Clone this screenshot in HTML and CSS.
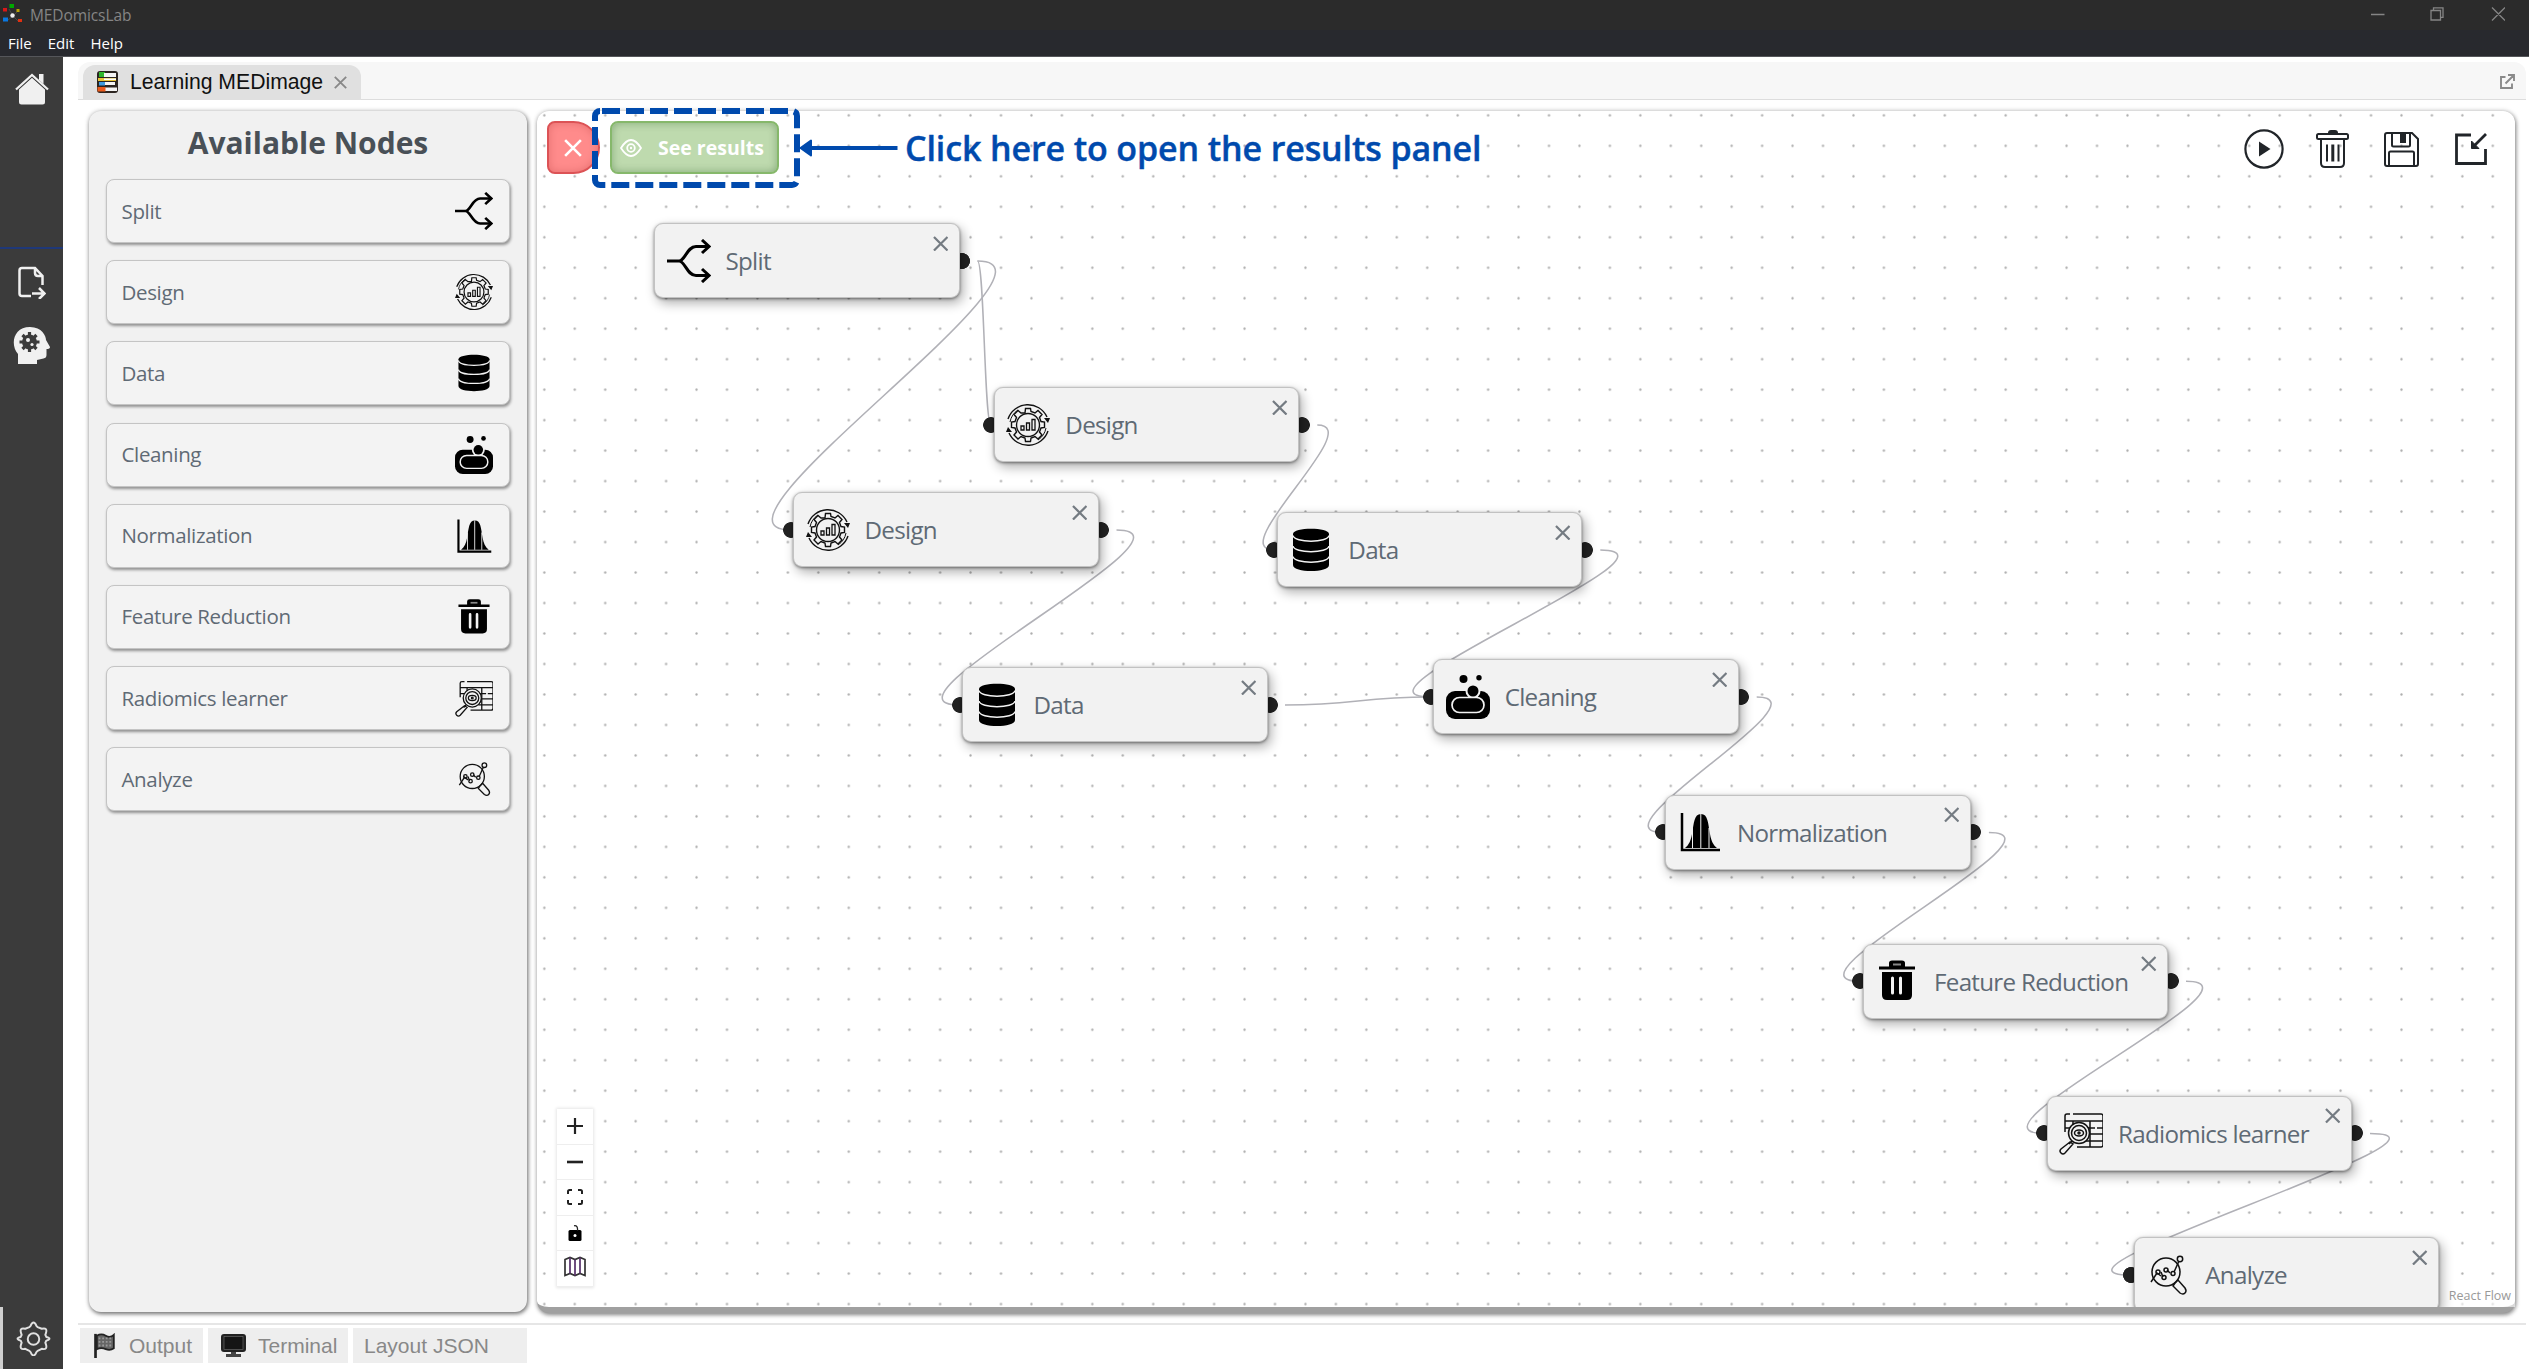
FILE: index.html
```html
<!DOCTYPE html>
<html lang="en">
<head>
<meta charset="utf-8">
<title>MEDomicsLab</title>
<link rel="stylesheet" href="styles.css">
</head>
<body>
<svg class="defs" width="0" height="0">
  <symbol id="i-split" viewBox="0 0 44 44">
    <g fill="none" stroke="#000" stroke-width="3"><path d="M0 22H12C18 22 20 7.500 29 7.500H42M12 22C18 22 20 36.500 29 36.500H42"/><path d="M35 1l7 6.500-7 6.500M35 30l7 6.500-7 6.500"/></g>
  </symbol>
  <symbol id="i-design" viewBox="0 0 44 44">
    <g fill="none" stroke="#111" stroke-width="1.400">
      <path d="M2 16A21 21 0 0 1 41 14M42 28A21 21 0 0 1 3 30"/>
      <path d="M4 19A18.500 18.500 0 0 1 12 7M40 25A18.500 18.500 0 0 1 32 37" stroke-width="1"/>
      <circle cx="22" cy="22" r="11.500"/>
      <path d="M19 10l.5-4.500h5L25 8.500l4 1.500 3-2.500 4 4-2.500 3 1.500 4 3.500.5v5.500l-3.500.5-1.500 4 2.500 3-4 4-3-2.500-4 1.500-.5 3.500h-5l-.5-3.500-4-1.500-3 2.500-4-4 2.500-3-1.500-4-3.500-.5V19l3.500-.5 1.500-4-2.500-3 4-4 3 2.500z"/>
      <path d="M15 23h3v4h-3zM20.500 20h3v7h-3zM26 16.500h3V27h-3z" stroke-width="1.300"/>
    </g>
    <path d="M38 15h6l-2 5zM0 29l2-5 4 5z" fill="#111"/>
  </symbol>
  <symbol id="i-data" viewBox="0 0 44 44">
    <path d="M4 6C4-1 40-1 40 6v31c0 8-36 8-36 0z"/>
    <path d="M4 7.500c1 7.500 35 7.500 36 0M4 18c1 7.500 35 7.500 36 0M4 28.500c1 7.500 35 7.500 36 0" fill="none" stroke="#f2f2f2" stroke-width="1.500"/>
  </symbol>
  <symbol id="i-clean" viewBox="0 0 44 44">
    <rect x="0" y="16" width="44" height="28" rx="9"/>
    <circle cx="27" cy="16" r="7.500" fill="#f2f2f2"/>
    <rect x="6" y="22.500" width="32" height="15" rx="7.500" stroke="#f2f2f2" stroke-width="1.700"/>
    <circle cx="27" cy="16" r="5.500"/><circle cx="17.500" cy="4" r="4"/><circle cx="33" cy="2.800" r="2.700"/>
  </symbol>
  <symbol id="i-norm" viewBox="0 0 44 44">
    <path d="M4 3v37h38" fill="none" stroke="#000" stroke-width="2.500"/>
    <path d="M7 38c4-3 6-8 7-14 2-11 2-20 9-20s7 9 9 20c1 6 3 11 7 14z"/>
    <path d="M14.500 18v20M22.800 4v34M31 18v20" stroke="#f2f2f2" stroke-width="1"/>
  </symbol>
  <symbol id="i-bin" viewBox="0 0 44 44">
    <path d="M4 7.500h10V4q0-2.500 3-2.500h10q3 0 3 2.500v3.500h10v3H4z"/><path d="M18 4.500h8v2h-8z" fill="#888"/>
    <path d="M7 13h30v23q0 5-5 5H12q-5 0-5-5z"/>
    <path d="M17.500 19v15M25.500 19v15" stroke="#f2f2f2" stroke-width="3" stroke-linecap="round"/>
  </symbol>
  <symbol id="i-learn" viewBox="0 0 44 44">
    <g fill="none" stroke="#111" stroke-width="1.500">
      <path d="M11 3H8Q6 3 6 5v16M14 3h28q2 0 2 2v29q0 2-2 2H18M6 10h38M6 17h9M27 17h9m2 0h6M29 23h15M27 30h17M14 10v6M31 10v26"/>
      <circle cx="20" cy="22" r="10.500" fill="#f2f2f2"/><circle cx="20" cy="22" r="7.500"/><ellipse cx="20" cy="22" rx="4.500" ry="3"/><circle cx="20" cy="22" r="1"/>
      <path d="M13 30l-3 3M11 31l-9 7q-2 2 0 4t4 0l8-9z"/>
    </g>
  </symbol>
  <symbol id="i-analyze" viewBox="0 0 44 44">
    <g fill="none" stroke="#111" stroke-width="1.500">
      <circle cx="20" cy="19" r="14"/><path d="M5 29l6-9 4 3M17 24l-2-5M21 17l3 3M28 19l5-11"/>
      <circle cx="12" cy="19" r="2"/><circle cx="18" cy="24.500" r="2"/><circle cx="20" cy="17" r="2"/><circle cx="27" cy="20.500" r="2"/><circle cx="34" cy="6" r="2.700"/>
      <path d="M29 30l3-3 7 8q2 3 0 5t-5 0l-7-7 2-3"/>
    </g>
  </symbol>
  <symbol id="i-x" viewBox="0 0 16 16"><path d="M1 1l14 14M15 1L1 15" fill="none" stroke="currentColor" stroke-width="2.300"/></symbol>
</svg>

<div class="app">
  <header class="titlebar">
    <div class="title-row">
      <svg class="logo" viewBox="0 0 20 20"><path d="M6 5l4 7M14 8l-4 4M5 16l5-4M15 17l-5-5" stroke="#555" stroke-width=".7"/><rect x="6.500" y="0" width="4.500" height="4" fill="#00a800"/><rect x="0" y="4" width="4" height="3.500" fill="#d81818"/><rect x="13.500" y="5" width="3" height="3" fill="#b9a300"/><circle cx="9.500" cy="11.500" r="2.200" fill="#eee"/><rect x="0" y="13.500" width="5" height="4" fill="#0a78e0"/><rect x="15" y="15" width="4" height="3" fill="#e03010"/></svg>
      <span class="app-name">MEDomicsLab</span>
      <svg class="win-ctl" viewBox="0 0 134 14"><g fill="none" stroke="#858585" stroke-width="1.300"><path d="M0 7.500h13.500M60 3.500h9.500v9.500H60zM62.500 3.500V.8H72v9.500h-2.500M121 .5l13 13M134 .5l-13 13"/></g></svg>
    </div>
    <nav class="menu"><span>File</span><span>Edit</span><span>Help</span></nav>
  </header>

  <div class="workspace">
    <aside class="rail">
      <svg class="rail-home" viewBox="0 0 34 34"><path d="M4 17L17 5.500 30 17v13q0 2.500-2.500 2.500h-21Q4 32.500 4 30z" fill="#f0f0f0"/><path d="M1 17L17 2.500 33 17" fill="none" stroke="#3b3b3b" stroke-width="5"/><path d="M24 2h4.500v10L24 8z" fill="#f0f0f0"/><path d="M1 17.500L17 3l16 14.500" fill="none" stroke="#f0f0f0" stroke-width="2.300"/></svg>
      <div class="rail-line"></div>
      <svg class="rail-file" viewBox="0 0 28 33"><g fill="none" stroke="#f0f0f0" stroke-width="2.500"><path d="M13 30H4q-2.500 0-2.500-2.500v-23Q1.500 2 4 2h13l7.500 8v9M17 2v5q0 3 3 3h4.500M14 27.500h12M21 22l5.500 5.500L21 33"/></g></svg>
      <svg class="rail-head" viewBox="0 0 37 37"><path d="M5 37V27C-3 18 0 0 17 0c12 0 16 9 16 13l4 7q0 2-3.500 2v6q0 3-3 3.500L24 33v4z" fill="#f0f0f0"/><circle cx="16.500" cy="15" r="7.500" fill="#3b3b3b"/><path d="M16.500 5v20M6.500 15h20M9.500 8l14 14M23.500 8l-14 14" stroke="#3b3b3b" stroke-width="3.200"/><circle cx="15" cy="13" r="2" fill="#f0f0f0"/><circle cx="19" cy="17.500" r="1.600" fill="#f0f0f0"/></svg>
      <div class="rail-foot">
        <svg class="rail-gear" viewBox="0 0 34 34"><g fill="none" stroke="#e0e0e0" stroke-width="1.900" stroke-linejoin="round"><path d="M14 5q3-7 6 0l1 1 4 1.500q6-1.500 4 4.500l-.5 1.500 1 2q6 1.500 0 3.500l-1 2 .5 1.500q2 6-4 4.500l-4 2-1 1q-3 7-6 0l-1-1-4-2q-6 1.500-4-4.500l.5-1.500-1-2q-6-2 0-3.500l1-2L5 12Q3 6 9 7.500L13 6z"/><circle cx="17" cy="17.500" r="5.600"/></g></svg>
      </div>
    </aside>

    <main class="main">
      <div class="tabbar">
        <div class="tab">
          <svg class="books" viewBox="0 0 22 22"><rect x="1" y="0" width="21" height="22" rx="3" fill="#2b2420"/><path d="M3 1h6v5H3z" fill="#2eb62c"/><path d="M8 2h12v4H8zM8 11h11v3H8zM8 16.500h13v3.500H8z" fill="#f4f4f4"/><path d="M2 7h18v3H2z" fill="#e8c438"/><path d="M8 7.500h12v1.500H8z" fill="#fff"/><path d="M3 11h6v3.500H3z" fill="#3f9be0"/><path d="M1.500 16h8v4.500h-8z" fill="#ea5a1c"/></svg>
          <span class="tab-name">Learning MEDimage</span>
          <svg class="tab-x"><use href="#i-x"/></svg>
        </div>
        <svg class="popout" viewBox="0 0 15 15"><g fill="none" stroke="#8a8a8a" stroke-width="1.900"><path d="M5.500 3H1v11h11V9.500M8 1h6v6M14 1L5.500 9.500"/></g></svg>
      </div>

      <div class="panels">
        <section class="palette">
          <h1>Available Nodes</h1>
          <div class="item"><span>Split</span><svg><use href="#i-split"/></svg></div>
          <div class="item"><span>Design</span><svg><use href="#i-design"/></svg></div>
          <div class="item"><span>Data</span><svg><use href="#i-data"/></svg></div>
          <div class="item"><span>Cleaning</span><svg><use href="#i-clean"/></svg></div>
          <div class="item"><span>Normalization</span><svg><use href="#i-norm"/></svg></div>
          <div class="item"><span>Feature Reduction</span><svg><use href="#i-bin"/></svg></div>
          <div class="item"><span>Radiomics learner</span><svg><use href="#i-learn"/></svg></div>
          <div class="item"><span>Analyze</span><svg><use href="#i-analyze"/></svg></div>
        </section>

        <section class="flow">
          <div class="canvas">
            <svg class="edges" viewBox="537 111 1978 1196">
              <defs><pattern id="dots" x="529.100" y="100.100" width="30.445" height="30.480" patternUnits="userSpaceOnUse"><circle cx="15.220" cy="15.240" r="1.150" fill="#acacac"/></pattern></defs>
              <rect x="537" y="111" width="1978" height="1196" fill="url(#dots)"/>
              <g fill="none" stroke="#b1b1b7" stroke-width="1.550">
                <path d="M977.500 261C1083 261 684.800 530 790.300 530"/>
                <path d="M977.500 261C984.300 261 984.300 425 991 425"/>
                <path d="M1317.300 425C1368 425 1223.400 550 1274.100 550"/>
                <path d="M1116.500 530C1213.200 530 862.600 705 959.300 705"/>
                <path d="M1600.300 550C1700.800 550 1330 697 1430.500 697"/>
                <path d="M1285 705C1357.800 705 1357.800 697 1430.500 697"/>
                <path d="M1756.700 697C1831.500 697 1587.900 832.400 1662.700 832.400"/>
                <path d="M1988.900 832.400C2076.500 832.400 1772.200 981.300 1859.800 981.300"/>
                <path d="M2186 981.300C2278 981.300 1951.800 1133.400 2043.800 1133.400"/>
                <path d="M2370 1133.400C2489.200 1133.400 2011.900 1275 2131.100 1275"/>
              </g>
            </svg>

            <div class="node n-split out"><svg class="node-icon"><use href="#i-split"/></svg><span>Split</span><svg class="node-x"><use href="#i-x"/></svg></div>
            <div class="node n-design-a in out"><svg class="node-icon"><use href="#i-design"/></svg><span>Design</span><svg class="node-x"><use href="#i-x"/></svg></div>
            <div class="node n-design-b in out"><svg class="node-icon"><use href="#i-design"/></svg><span>Design</span><svg class="node-x"><use href="#i-x"/></svg></div>
            <div class="node n-data-a in out"><svg class="node-icon"><use href="#i-data"/></svg><span>Data</span><svg class="node-x"><use href="#i-x"/></svg></div>
            <div class="node n-data-b in out"><svg class="node-icon"><use href="#i-data"/></svg><span>Data</span><svg class="node-x"><use href="#i-x"/></svg></div>
            <div class="node n-clean in out"><svg class="node-icon"><use href="#i-clean"/></svg><span>Cleaning</span><svg class="node-x"><use href="#i-x"/></svg></div>
            <div class="node n-norm in out"><svg class="node-icon"><use href="#i-norm"/></svg><span>Normalization</span><svg class="node-x"><use href="#i-x"/></svg></div>
            <div class="node n-reduce in out"><svg class="node-icon"><use href="#i-bin"/></svg><span>Feature Reduction</span><svg class="node-x"><use href="#i-x"/></svg></div>
            <div class="node n-learn in out"><svg class="node-icon"><use href="#i-learn"/></svg><span>Radiomics learner</span><svg class="node-x"><use href="#i-x"/></svg></div>
            <div class="node n-analyze in"><svg class="node-icon"><use href="#i-analyze"/></svg><span>Analyze</span><svg class="node-x"><use href="#i-x"/></svg></div>
            <a class="credit">React Flow</a>
          </div>

          <div class="results-bar">
            <button class="btn-close"><svg><use href="#i-x"/></svg></button>
            <button class="btn-results"><svg viewBox="0 0 22 18"><g fill="none" stroke="#fff" stroke-width="1.800"><path d="M1 9Q6 1 11 1t10 8q-5 8-10 8T1 9z"/><circle cx="11" cy="9" r="3.800"/></g><circle cx="11" cy="9" r="1.200" fill="#fff"/></svg><span>See results</span></button>
          </div>

          <div class="callout">
            <svg class="callout-art" viewBox="592 108 310 80"><rect x="595" y="111" width="202" height="74" rx="5" fill="none" stroke="#004aad" stroke-width="6" stroke-dasharray="18 6" stroke-dashoffset="-2"/><path d="M808 148H897.500" stroke="#004aad" stroke-width="4"/><path d="M800.500 148L811 140.500v15z" fill="#004aad" stroke="#004aad" stroke-width="2" stroke-linejoin="round"/></svg>
            <span>Click here to open the results panel</span>
          </div>

          <div class="tools">
            <svg class="t-play" viewBox="0 0 40 40"><circle cx="20" cy="20" r="18.600" fill="none" stroke="#212529" stroke-width="2.200"/><path d="M15 12.500L26.500 20 15 27.500z" fill="#212529"/></svg>
            <svg class="t-bin" viewBox="0 0 33 38"><g fill="none" stroke="#212529" stroke-width="2"><rect x="1" y="4" width="31" height="5" rx="1.500"/><path d="M5 9v24q0 4 4 4h15q4 0 4-4V9M11 14.500v17M22.500 14.500v17"/></g><path d="M16.800 14.500v17" stroke="#212529" stroke-width="3"/><path d="M12 3q0-3 3-3h4q3 0 3 3z" fill="#212529"/></svg>
            <svg class="t-save" viewBox="0 0 35 35"><g fill="none" stroke="#212529" stroke-width="2"><path d="M3 1h25l6 6v25q0 2-2 2H3q-2 0-2-2V3q0-2 2-2zM8 1v12q0 1.500 1.500 1.500h15q1.500 0 1.500-1.500V1M5 34V21q0-1.500 1.500-1.500h22Q30 19.500 30 21v13"/></g><path d="M16 1h6v10h-6z" fill="#212529"/></svg>
            <svg class="t-import" viewBox="0 0 32 32"><path d="M16 2H1.500v28.500h29V16M31 1L19 13" fill="none" stroke="#212529" stroke-width="2.800"/><path d="M16.500 8v7.500H24z" fill="#212529" stroke="#212529"/></svg>
          </div>

          <div class="controls">
            <div><svg viewBox="0 0 16 16"><path d="M8 0v16M0 8h16" stroke="#222" stroke-width="2.200"/></svg></div>
            <div><svg viewBox="0 0 16 16"><path d="M0 8h16" stroke="#222" stroke-width="2.600"/></svg></div>
            <div><svg viewBox="0 0 16 16"><path d="M1 5V2.500Q1 1 2.500 1H5M11 1h2.500Q15 1 15 2.500V5M15 11v2.500q0 1.500-1.500 1.500H11M5 15H2.500Q1 15 1 13.500V11" fill="none" stroke="#222" stroke-width="2"/></svg></div>
            <div><svg viewBox="0 0 16 16"><rect x="1.500" y="5" width="13" height="11" rx="1.500"/><path d="M7 .8q4-.8 3.500 5" fill="none" stroke="#222" stroke-width="1.300"/><circle cx="8" cy="10.500" r="1.500" fill="#fff"/></svg></div>
            <div><svg class="map" viewBox="0 0 22 20"><path d="M1 3l5-2 5 2 5-2 5 2v16l-5-2-5 2-5-2-5 2z" fill="none" stroke="#333" stroke-width="1.700"/><path d="M6 1v16M16 1v16M11 3v16" stroke="#56306a" stroke-width="1.700"/></svg></div>
          </div>
        </section>
      </div>

      <footer class="dock">
        <div class="dock-tab output"><svg viewBox="0 0 24 28"><path d="M2.500 1v27" stroke="#222" stroke-width="3"/><path d="M4 3q5-3 10 0t9-1v15q-4 3-9 1t-10 0z" fill="#666" stroke="#222" stroke-width="2"/><path d="M6 6h16M6 10h16M6 14h16" stroke="#999" stroke-dasharray="2 2" stroke-width="2"/></svg><span>Output</span></div>
        <div class="dock-tab terminal"><svg viewBox="0 0 25 25"><rect x="0" y="1" width="25" height="18" rx="3" fill="#222"/><rect x="3" y="3.500" width="19" height="13" fill="#151515" stroke="#666" stroke-width=".7"/><path d="M10 19h5v3h-5zM5 21h15v3H5z" fill="#444"/></svg><span>Terminal</span></div>
        <div class="dock-tab layout"><span>Layout JSON</span></div>
      </footer>
    </main>
  </div>
</div>
</body>
</html>
```
FILE: styles.css
```css
* { box-sizing: border-box; }
body { margin: 0; background: #fff; font-family: "Open Sans", "Noto Sans", sans-serif; overflow: hidden; }
svg { display: block; flex: none; }
.defs { position: absolute; }
.app { display: flex; flex-direction: column; width: 2529px; height: 1369px; }

.titlebar { height: 57px; background: #28292e; border-bottom: 1px solid #55565a; flex: none; }
.title-row { display: flex; align-items: center; height: 30px; padding: 0 24px 0 3px; background: #2b2b2b; }
.logo { width: 20px; height: 20px; margin-top: -2px; }
.app-name { margin-left: 7px; font-size: 15.500px; letter-spacing: -.1px; color: #858585; }
.win-ctl { width: 134px; height: 14px; margin: -3px 0 0 auto; }
.menu { display: flex; gap: 16px; padding-left: 8px; font-size: 15px; line-height: 26px; color: #fff; }

.workspace { display: flex; flex: 1; min-height: 0; }
.rail { display: flex; flex-direction: column; align-items: center; width: 63px; background: #3b3b3b; }
.rail-home { width: 34px; height: 34px; margin-top: 15px; }
.rail-line { width: 100%; height: 2px; margin-top: 141px; background: #1f3878; }
.rail-file { width: 28px; height: 33px; margin-top: 17px; }
.rail-head { width: 37px; height: 37px; margin-top: 28px; }
.rail-foot { display: flex; align-items: center; width: 100%; height: 62px; margin-top: auto; padding-left: 13px; border-left: 3px solid #cfcfcf; }
.rail-gear { width: 35px; height: 35px; }

.main { flex: 1; min-width: 0; display: flex; flex-direction: column; padding: 5px 3px 0 15px; }
.tabbar { display: flex; align-items: center; height: 38px; background: #f7f7f7; border-bottom: 1px solid #ddd; border-radius: 12px 12px 0 0; padding: 3px 11px 0 5px; flex: none; }
.tab { display: flex; align-items: center; width: 278px; height: 35px; padding-left: 13px; background: #e0e0e0; border-radius: 12px 12px 0 0; }
.books { width: 22px; height: 22px; }
.tab-name { margin-left: 12px; width: 192px; white-space: nowrap; font: 21.200px/30px "Liberation Sans", Arial, sans-serif; color: #111; padding-bottom: 1px; }
.tab-x { width: 13px; height: 13px; margin-left: 12px; color: #888; }
.popout { width: 15px; height: 15px; margin: -2px 0 0 auto; }

.panels { display: flex; gap: 10px; padding: 11px 11px 0; height: 1223px; flex: none; }
.palette { display: flex; flex-direction: column; gap: 17.200px; width: 438px; height: 1201px; padding: 0 17px; background: #f1f1f1; border-radius: 12px; box-shadow: 1px 2px 4px rgba(0,0,0,.5), 0 0 5px rgba(0,0,0,.2); }
.palette h1 { margin: 0 0 -17.200px; padding-top: 10px; height: 68px; font-size: 30px; line-height: 44px; font-weight: 700; text-align: center; color: #495057; }
.item { display: flex; align-items: center; justify-content: space-between; height: 64px; padding: 0 16px 0 14.500px; border-radius: 8px; background: #f3f3f3; border: 1px solid #c4c4c4; box-shadow: 1px 2px 3px rgba(0,0,0,.4); font-size: 20.500px; letter-spacing: -.35px; color: #5f6a75; }
.item svg { width: 38px; height: 38px; }
.item span { padding-bottom: 1px; }

.flow { position: relative; width: 1978px; height: 1202px; background: #fff; border-bottom: 6px solid #a0a0a0; border-radius: 12px; box-shadow: 1px 2px 4px rgba(0,0,0,.4), 0 0 5px rgba(0,0,0,.22); }
.canvas { position: relative; height: 1196px; border-radius: 12px 12px 0 0; overflow: hidden; }
.edges { width: 1978px; height: 1196px; }
.node { position: absolute; z-index: 1; isolation: isolate; width: 305.500px; height: 75px; padding-left: 12.500px; display: flex; align-items: center; font-size: 24.200px; letter-spacing: -.72px; color: #5f6a75; }
.node::after { content: ""; position: absolute; z-index: -1; inset: 0; background: #f2f2f2; border: 1px solid #c2c2c2; border-radius: 9px; box-shadow: 3px 5px 12px rgba(0,0,0,.32), 0 1px 3px rgba(0,0,0,.45); }
.node::before { content: ""; position: absolute; z-index: -2; left: -10.500px; right: -10.500px; top: 29.700px; height: 16px; background: radial-gradient(circle, #222 7.500px, transparent 8.200px) left / 16px 16px no-repeat, radial-gradient(circle, #222 7.500px, transparent 8.200px) right / 16px 16px no-repeat; }
.n-split::before { left: auto; width: 16px; }
.n-analyze::before { right: auto; width: 16px; }
.node-icon { width: 44px; height: 44px; }
.node span { margin-left: 15px; white-space: nowrap; }
.node-x { position: absolute; left: 278.500px; top: 12.500px; width: 15.500px; height: 15.500px; color: #747b82; }
.n-split { left: 117px; top: 112.300px; }
.n-design-a { left: 456.800px; top: 276.300px; }
.n-design-b { left: 256px; top: 381.300px; }
.n-data-a { left: 739.800px; top: 401.300px; }
.n-data-b { left: 425px; top: 556.300px; }
.n-clean { left: 896.200px; top: 548.300px; }
.n-norm { left: 1128.400px; top: 683.700px; }
.n-reduce { left: 1325.500px; top: 832.700px; }
.n-learn { left: 1509.500px; top: 984.700px; }
.n-analyze { left: 1596.800px; top: 1126.300px; }

.results-bar { position: absolute; z-index: 2; left: 10px; top: 10px; display: flex; gap: 10.500px; }
.results-bar button { display: flex; align-items: center; height: 53px; padding: 0; color: #fff; font: 700 19.500px "Open Sans", sans-serif; }
.btn-close { width: 52.500px; justify-content: center; background: #ff8b8b; border: 2px solid #dc5356; border-radius: 8px 27px 27px 8px; box-shadow: inset 0 0 8px rgba(120,0,0,.2); }
.btn-close svg { width: 18px; height: 18px; }
.btn-results { width: 169px; background: #bedaae; border: 2px solid #86b86b; border-radius: 8px; box-shadow: inset 0 0 8px rgba(0,60,0,.3); }
.btn-results svg { width: 22px; height: 18px; margin-left: 8px; }
.btn-results span { margin-left: 16px; white-space: nowrap; }

.callout { position: absolute; z-index: 3; left: 55px; top: -3px; display: flex; align-items: center; height: 80px; font-size: 34px; font-weight: 600; letter-spacing: -.12px; color: #004aad; white-space: nowrap; }
.callout-art { width: 310px; height: 80px; }
.callout span { margin-left: 3px; -webkit-text-stroke: .4px #004aad; }

.tools { position: absolute; z-index: 2; right: 28px; top: 18px; display: flex; align-items: center; }
.t-play { width: 40px; height: 40px; }
.t-bin { width: 33px; height: 38px; margin-left: 32px; }
.t-save { width: 35px; height: 35px; margin-left: 35px; }
.t-import { width: 32px; height: 32px; margin-left: 36px; }

.controls { position: absolute; z-index: 2; left: 19.500px; top: 998px; width: 36px; background: #fff; box-shadow: 0 0 3px 1px rgba(0,0,0,.1); }
.controls div { display: flex; align-items: center; justify-content: center; height: 35.600px; border-bottom: 1px solid #eee; }
.controls svg { width: 16px; height: 16px; }
.controls .map { width: 22px; height: 21px; margin-top: -5px; }
.credit { position: absolute; right: 0; bottom: 0; padding: 2px 4px 3px; background: rgba(255,255,255,.6); font-size: 12.500px; color: #999; }

.dock { display: flex; gap: 5px; height: 40px; border-top: 2px solid #e6e6e6; padding: 3px 2px 0; }
.dock-tab { display: flex; align-items: center; height: 35px; background: #eee; white-space: nowrap; font: 21px/30px "Liberation Sans", Arial, sans-serif; color: #888; }
.output { width: 123px; padding-left: 12px; }
.output svg { width: 24px; height: 25px; }
.output span { margin-left: 13px; }
.terminal { width: 140px; padding-left: 13px; }
.terminal svg { width: 25px; height: 25px; }
.terminal span { margin-left: 12px; }
.layout { width: 174px; padding-left: 11px; }
```
